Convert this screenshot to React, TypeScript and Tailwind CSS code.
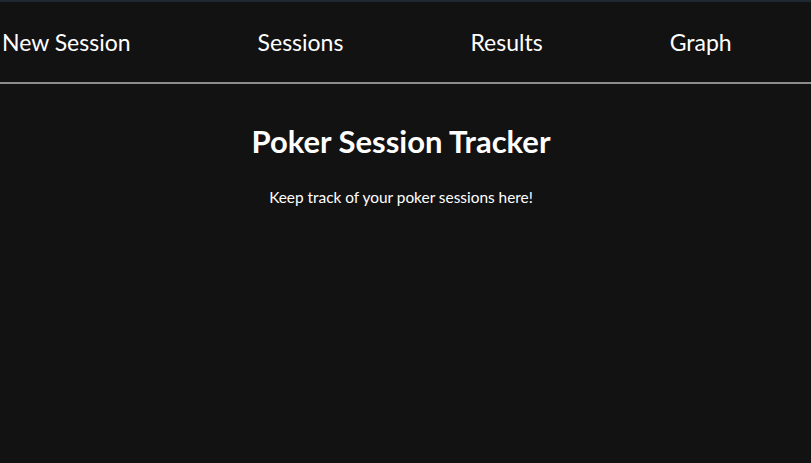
export default function App() {
  const links = ["New Session", "Sessions", "Results", "Graph"];
  return (
    <div className="min-h-[463px] bg-[#121212] text-white font-['Lato',sans-serif]">
      <nav className="h-[84px] border-t-2 border-t-[#1f2731] border-b-2 border-b-[#8c8c8c] flex items-center">
        <ul className="flex gap-[127px] pl-[2px]">
          {links.map((l) => (
            <li key={l} className="text-[23px] leading-none">
              {l}
            </li>
          ))}
        </ul>
      </nav>
      <main className="flex flex-col items-center pr-[9px]">
        <h1 className="mt-[39px] text-[31px] font-bold leading-[1.2]">Poker Session Tracker</h1>
        <p className="mt-[26px] text-[15.4px]">Keep track of your poker sessions here!</p>
      </main>
    </div>
  );
}
